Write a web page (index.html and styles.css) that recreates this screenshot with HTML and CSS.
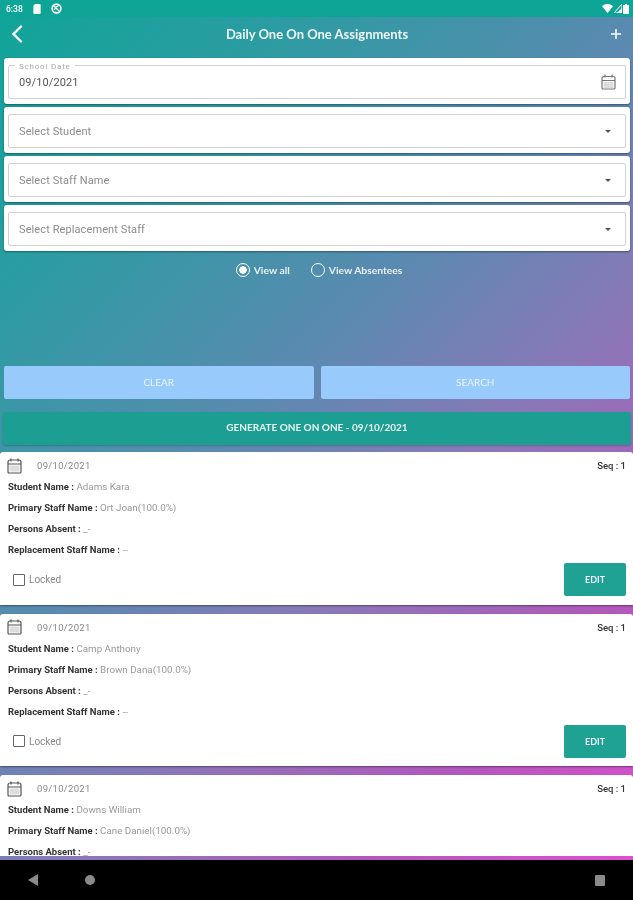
FILE: index.html
```html
<!DOCTYPE html>
<html lang="en">
<head>
<meta charset="utf-8">
<title>Daily One On One Assignments</title>
<link rel="stylesheet" href="styles.css">
</head>
<body>
<div class="screen">
  <div class="status">
    <div class="status-left">
      <span class="clock">6:38</span>
      <svg class="st-icon" width="8" height="10" viewBox="0 0 8 11"><path d="M2 0h5a1 1 0 0 1 1 1v9a1 1 0 0 1-1 1H1a1 1 0 0 1-1-1V2z" fill="#fff"/></svg>
      <svg class="st-icon" width="11" height="11" viewBox="0 0 11 11"><circle cx="5.500" cy="5.500" r="4.400" fill="none" stroke="#fff" stroke-width="1.600"/><path d="M2.500 2.500l6 6M5.500 3.500l2.500-1M3 7l3-4" stroke="#fff" stroke-width="1.200"/></svg>
    </div>
    <div class="status-right">
      <svg width="11" height="9" viewBox="0 0 11 9"><path d="M0 2.200C3-.7 8-.7 11 2.200L5.500 9z" fill="#fff"/></svg>
      <svg width="8" height="9" viewBox="0 0 8 9"><path d="M8 0v9H0z" fill="none" stroke="#fff" stroke-width="1"/><path d="M8 4v5H3z" fill="#fff"/></svg>
      <svg width="6" height="10" viewBox="0 0 6 10"><path d="M2 0h2v1h1.500a.5.5 0 0 1 .5.5V10H0V1.500a.5.5 0 0 1 .5-.5H2z" fill="#fff"/></svg>
    </div>
  </div>
  <main class="app">
    <header class="topbar">
      <svg class="back" width="12" height="18" viewBox="0 0 12 18"><path d="M10 1.500L2.500 9l7.500 7.500" fill="none" stroke="#fff" stroke-width="2.400" stroke-linecap="round"/></svg>
      <h1 class="title">Daily One On One Assignments</h1>
      <svg class="plus" width="10" height="10" viewBox="0 0 10 10"><path d="M5 0v10M0 5h10" stroke="#fff" stroke-width="1.500"/></svg>
    </header>

    <section class="filters">
      <div class="field-card">
        <div class="field">
          <span class="legend">School Date</span>
          <span class="value">09/10/2021</span>
          <svg class="field-cal" width="15" height="16" viewBox="0 0 15 16"><path d="M1 4.500a2 2 0 0 1 2-2h9a2 2 0 0 1 2 2v9.500a1 1 0 0 1-1 1H2a1 1 0 0 1-1-1zM1 6.500h13M4 .5v3M11 .5v3" fill="none" stroke="#777" stroke-width="1.200"/><rect x="2.500" y="8" width="10" height="6" fill="#ddd"/></svg>
        </div>
      </div>
      <div class="field-card"><div class="field"><span class="placeholder">Select Student</span><span class="caret"></span></div></div>
      <div class="field-card"><div class="field"><span class="placeholder">Select Staff Name</span><span class="caret"></span></div></div>
      <div class="field-card"><div class="field"><span class="placeholder">Select Replacement Staff</span><span class="caret"></span></div></div>
    </section>

    <div class="radios">
      <label class="radio"><span class="dot on"></span>View all</label>
      <label class="radio"><span class="dot"></span>View Absentees</label>
    </div>

    <div class="actions">
      <button class="btn light">CLEAR</button>
      <button class="btn light">SEARCH</button>
    </div>
    <button class="btn generate">GENERATE ONE ON ONE - 09/10/2021</button>

    <section class="list">
      <article class="card">
        <div class="card-top">
          <div class="date"><svg width="15" height="16" viewBox="0 0 15 16"><path d="M1 4a2 2 0 0 1 2-2h9a2 2 0 0 1 2 2v10a1 1 0 0 1-1 1H2a1 1 0 0 1-1-1zM1 6h13M4 .5v3M11 .5v3" fill="none" stroke="#555" stroke-width="1.200"/><rect x="2.500" y="7.500" width="10" height="6" fill="#ddd"/></svg><span>09/10/2021</span></div>
          <b class="seq">Seq : 1</b>
        </div>
        <p class="line"><b>Student Name :</b> Adams Kara</p>
        <p class="line"><b>Primary Staff Name :</b> Ort Joan(100.0%)</p>
        <p class="line"><b>Persons Absent :</b> _-</p>
        <p class="line"><b>Replacement Staff Name :</b> --</p>
        <div class="card-foot">
          <label class="lock"><span class="check"></span>Locked</label>
          <button class="edit">EDIT</button>
        </div>
      </article>
      <article class="card">
        <div class="card-top">
          <div class="date"><svg width="15" height="16" viewBox="0 0 15 16"><path d="M1 4a2 2 0 0 1 2-2h9a2 2 0 0 1 2 2v10a1 1 0 0 1-1 1H2a1 1 0 0 1-1-1zM1 6h13M4 .5v3M11 .5v3" fill="none" stroke="#555" stroke-width="1.200"/><rect x="2.500" y="7.500" width="10" height="6" fill="#ddd"/></svg><span>09/10/2021</span></div>
          <b class="seq">Seq : 1</b>
        </div>
        <p class="line"><b>Student Name :</b> Camp Anthony</p>
        <p class="line"><b>Primary Staff Name :</b> Brown Dana(100.0%)</p>
        <p class="line"><b>Persons Absent :</b> _-</p>
        <p class="line"><b>Replacement Staff Name :</b> --</p>
        <div class="card-foot">
          <label class="lock"><span class="check"></span>Locked</label>
          <button class="edit">EDIT</button>
        </div>
      </article>
      <article class="card">
        <div class="card-top">
          <div class="date"><svg width="15" height="16" viewBox="0 0 15 16"><path d="M1 4a2 2 0 0 1 2-2h9a2 2 0 0 1 2 2v10a1 1 0 0 1-1 1H2a1 1 0 0 1-1-1zM1 6h13M4 .5v3M11 .5v3" fill="none" stroke="#555" stroke-width="1.200"/><rect x="2.500" y="7.500" width="10" height="6" fill="#ddd"/></svg><span>09/10/2021</span></div>
          <b class="seq">Seq : 1</b>
        </div>
        <p class="line"><b>Student Name :</b> Downs William</p>
        <p class="line"><b>Primary Staff Name :</b> Cane Daniel(100.0%)</p>
        <p class="line"><b>Persons Absent :</b> _-</p>
      </article>
    </section>
  </main>
  <nav class="navbar">
    <div class="nav-left">
      <svg width="10" height="12" viewBox="0 0 10 12"><path d="M10 0v12L0 6z" fill="#8a8a8a"/></svg>
      <svg width="10" height="10" viewBox="0 0 10 10"><circle cx="5" cy="5" r="5" fill="#8a8a8a"/></svg>
    </div>
    <svg width="10" height="11" viewBox="0 0 10 11"><rect width="10" height="11" rx="1" fill="#8a8a8a"/></svg>
  </nav>
</div>
</body>
</html>
```
FILE: styles.css
```css
* { box-sizing: border-box; }
html, body { margin: 0; padding: 0; }
body { width: 633px; height: 900px; overflow: hidden; font-family: "Roboto", sans-serif; background: #000; }
.screen { width: 633px; height: 900px; display: flex; flex-direction: column; filter: blur(.35px); background: linear-gradient(135deg, #0ea598 0%, #2c9ca2 20%, #5a8ab0 43%, #8a78b8 61%, #b258bc 80%, #e44fd2 100%); }
.status { height: 17px; flex: none; background: #0ea597; display: flex; justify-content: space-between; align-items: center; padding: 0 4px 0 6px; color: #fff; }
.status-left, .status-right { display: flex; align-items: center; }
.status-left { gap: 10px; }
.status-right { gap: 1px; }
.clock { font: 500 8.500px "Roboto", sans-serif; }
.app { flex: 1; min-height: 0; overflow: hidden; display: flex; flex-direction: column; }
.topbar { height: 41px; flex: none; display: flex; align-items: center; justify-content: space-between; padding: 0 12px 7px 11px; }
.title { margin: 0; font: 700 13px "Lato", sans-serif; color: #eef6f6; }
.filters { display: flex; flex-direction: column; gap: 3px; padding: 0 3px 0 4px; flex: none; }
.field-card { height: 46px; background: #fff; border-radius: 3px; padding: 7px 4px 5px 4px; box-shadow: 0 1px 2px rgba(0,40,60,.5); display: flex; }
.field { position: relative; flex: 1; border: 1px solid #d2d2d2; border-radius: 2px; display: flex; align-items: center; justify-content: space-between; padding: 0 12px 0 10px; font-size: 11px; letter-spacing: .1px; }
.legend { position: absolute; left: 6px; top: -4px; background: #fff; padding: 0 4px; font-size: 8px; line-height: 9px; letter-spacing: .8px; color: #aaa; }
.value { color: #555; }
.field-cal { margin-right: -3px; }
.placeholder { color: #8c8c8c; }
.caret { width: 0; height: 0; border-left: 3px solid transparent; border-right: 3px solid transparent; border-top: 3px solid #555; margin-right: 2px; }
.radios { display: flex; justify-content: center; gap: 21px; margin-top: 11px; height: 16px; padding-left: 5px; flex: none; }
.radio { display: flex; align-items: center; gap: 4px; font: 700 10.300px "Lato", sans-serif; color: #e8f0f4; }
.dot { width: 14px; height: 14px; border-radius: 50%; border: 1.500px solid #fff; display: block; }
.dot.on { background: radial-gradient(circle, #fff 0 3.500px, transparent 4px); }
.actions { display: flex; gap: 7px; margin-top: 88px; padding: 0 3px 0 4px; flex: none; }
.btn { border: 0; border-radius: 2px; font-family: "Lato", sans-serif; font-size: 10px; color: #eaf4ff; display: block; }
.light { flex: 1; height: 33px; padding: 0 0 2px; background: #98cbfc; }
.generate { height: 33px; flex: none; padding: 0 0 3px; margin: 13px 2px 0 3px; background: #1c9f92; font-weight: 700; color: #eaf6f4; box-shadow: 0 1px 2px rgba(0,0,0,.2); }
.list { flex: 1; min-height: 0; overflow: hidden; display: flex; flex-direction: column; gap: 9px; margin: 7px 0 4px; }
.card { background: #fff; height: 152.500px; flex: none; border-radius: 3px 3px 0 0; padding: 5px 7px 0 8px; box-shadow: 0 1px 2px rgba(0,0,0,.4); }
.card-top { display: flex; justify-content: space-between; align-items: center; height: 17px; }
.date { display: flex; align-items: center; gap: 15px; font-size: 9.500px; color: #888; letter-spacing: .3px; margin-left: -1px; }
.seq { font-size: 9.500px; color: #333; font-weight: 500; }
.line { margin: 0; height: 21px; display: flex; align-items: center; font-size: 9.800px; color: #999; white-space: pre; }
.line:first-of-type { margin-top: 2px; }
.line b { font-weight: 700; font-size: 9.500px; color: #333; }
.card-foot { display: flex; justify-content: space-between; align-items: center; margin-top: 3px; }
.lock { display: flex; align-items: center; gap: 4px; margin-left: 5px; font-size: 10px; color: #888; }
.check { width: 12px; height: 12px; border: 1.200px solid #666; border-radius: 1px; display: block; }
.edit { width: 62px; height: 33px; border: 0; border-radius: 2px; background: #1fa293; color: #eef; font: 700 9px "Lato", sans-serif; }
.navbar { height: 40px; flex: none; background: #000; display: flex; align-items: center; justify-content: space-between; padding: 0 28px; }
.nav-left { display: flex; align-items: center; gap: 47px; }
```
